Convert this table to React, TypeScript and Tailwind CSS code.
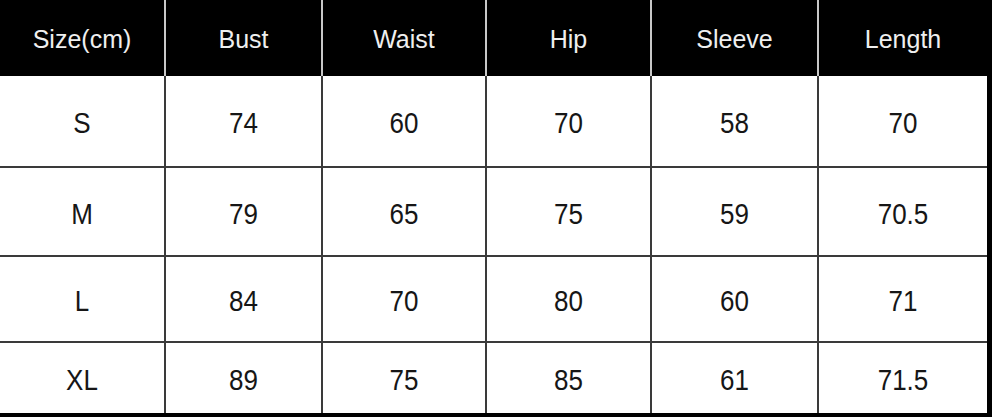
const headers = ["Size(cm)", "Bust", "Waist", "Hip", "Sleeve", "Length"];

const rows = [
  { cells: ["S", "74", "60", "70", "58", "70"], h: "h-[90px]" },
  { cells: ["M", "79", "65", "75", "59", "70.5"], h: "h-[89px]" },
  { cells: ["L", "84", "70", "80", "60", "71"], h: "h-[86px]" },
  { cells: ["XL", "89", "75", "85", "61", "71.5"], h: "h-[72px]" },
];

const cols = "grid grid-cols-[164px_157px_164px_165px_167px_170px]";

export default function App() {
  return (
    <div className="w-[992px] h-[417px] bg-white overflow-hidden font-['Liberation_Sans',Arial,sans-serif]">
      <div className="w-[992px] border-r-[5px] border-b-4 border-black">
        <div className={`${cols} h-[76px] bg-black`}>
          {headers.map((h, i) => (
            <div
              key={h}
              className={`flex items-center justify-center text-[25px] text-[#efefef] ${i > 0 ? "border-l-2 border-[#c8c8c8]" : ""}`}
            >
              <span className="inline-block scale-y-105 mt-[3px]">{h}</span>
            </div>
          ))}
        </div>
        {rows.map((row, r) => (
          <div key={r} className={`${cols} ${row.h} ${r > 0 ? "border-t-2 border-[#3a3a3a]" : ""}`}>
            {row.cells.map((c, i) => (
              <div
                key={i}
                className={`flex items-center justify-center text-[26px] text-[#161616] ${i > 0 ? "border-l-2 border-[#3a3a3a]" : ""}`}
              >
                <span className="inline-block scale-y-110 mt-[5px]">{c}</span>
              </div>
            ))}
          </div>
        ))}
      </div>
    </div>
  );
}
